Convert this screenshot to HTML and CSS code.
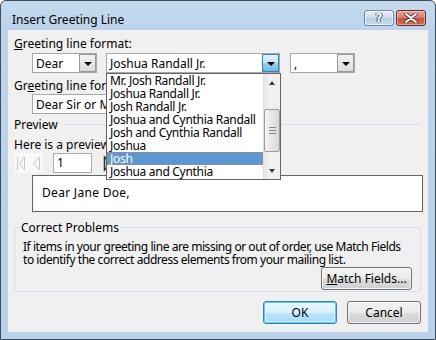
FILE: index.html
```html
<!DOCTYPE html>
<html>
<head>
<meta charset="utf-8">
<link rel="stylesheet" href="styles.css">
</head>
<body>
<div class="window">
  <div class="titlebar">
    <span class="title">Insert Greeting Line</span>
    <div class="caption-btns">
      <div class="cbtn help"><span>?</span></div>
      <div class="cbtn close">
        <svg width="14" height="10" viewBox="0 0 14 10"><path d="M2 1 L12 9 M12 1 L2 9" stroke="#5a2a26" stroke-width="3.6" stroke-linecap="round"/><path d="M2 1 L12 9 M12 1 L2 9" stroke="#fff" stroke-width="2" stroke-linecap="round"/></svg>
      </div>
    </div>
  </div>
  <div class="client">
    <div class="label l1"><u>G</u>reeting line format:</div>
    <div class="row r1">
      <div class="combo c-dear"><span class="val">Dear</span><span class="dd"><i class="tri"></i></span></div>
      <div class="combo c-name">
        <span class="val">Joshua Randall Jr.</span><span class="dd dd-hot"><i class="tri"></i></span>
        <div class="list">
          <ul class="items">
            <li>Mr. Josh Randall Jr.</li>
            <li>Joshua Randall Jr.</li>
            <li>Josh Randall Jr.</li>
            <li>Joshua and Cynthia Randall</li>
            <li>Josh and Cynthia Randall</li>
            <li>Joshua</li>
            <li class="sel">Josh</li>
            <li>Joshua and Cynthia</li>
          </ul>
          <div class="vscroll">
            <div class="arrow up"><i class="tri-up"></i></div>
            <div class="track"><div class="thumb"><span></span><span></span><span></span></div></div>
            <div class="arrow down"><i class="tri-down"></i></div>
          </div>
        </div>
      </div>
      <div class="combo c-punct"><span class="val">,</span><span class="dd"><i class="tri"></i></span></div>
    </div>
    <div class="label l2">Gr<u>e</u>eting line for invalid recipient names:</div>
    <div class="row r2">
      <div class="combo c-invalid"><span class="val">Dear Sir or Madam,</span><span class="dd"><i class="tri"></i></span></div>
    </div>
    <div class="sep-header"><span>Preview</span><div class="sep-line"></div></div>
    <div class="label l3">Here is a preview from your recipient list:</div>
    <div class="row nav">
      <div class="navbtns disabled">
        <svg width="29" height="20" viewBox="0 0 29 20"><path d="M3.5 4 V17 M10.5 4 L5.5 10.5 L10.5 17 Z M25.5 4 L19.5 10.5 L25.5 17 Z" fill="none" stroke="#c8c8c8" stroke-width="1"/></svg>
      </div>
      <div class="numbox">1</div>
      <div class="navbtns next">
        <svg width="29" height="20" viewBox="0 0 29 20"><path d="M1.5 4 L7.5 10.5 L1.5 17 Z" fill="none" stroke="#333" stroke-width="1.5"/></svg>
      </div>
    </div>
    <div class="preview-box">Dear Jane Doe,</div>
    <fieldset class="group">
      <legend>Correct Problems</legend>
      <p>If items in your greeting line are missing or out of order, use Match Fields<br>to identify the correct address elements from your mailing list.</p>
      <div class="grp-btns"><button class="btn match"><u>M</u>atch Fields...</button></div>
    </fieldset>
    <div class="footer">
      <button class="btn default">OK</button>
      <button class="btn">Cancel</button>
    </div>
  </div>
</div>
</body>
</html>
```
FILE: styles.css
```css
* { box-sizing: border-box; }
html, body { margin: 0; padding: 0; background: #fff; }
body { font-family: "Noto Sans", "Open Sans", sans-serif; font-size: 12px; color: #000; }

.window {
  width: 436px; height: 340px;
  border: 1px solid #3a4d5e;
  border-radius: 6px 6px 0 0;
  background: linear-gradient(#c6daee 0, #bcd3eb 30px, #b9d1ea 100%);
  display: flex; flex-direction: column;
  padding: 0 7px 7px 7px;
}
.titlebar {
  height: 29px; flex: none;
  display: flex; justify-content: space-between; align-items: flex-start;
}
.title { margin: 11px 0 0 4px; line-height: 15px; }
.caption-btns { display: flex; gap: 2px; margin: 9px 2px 0 0; }
.cbtn {
  width: 30px; height: 16px; border-radius: 3px;
  display: flex; align-items: center; justify-content: center;
}
.help {
  border: 1px solid #6e8aa8;
  background: linear-gradient(#e6eef7 0, #cfdcea 50%, #b9cde2 51%, #c6d9ec 100%);
  box-shadow: inset 0 0 0 1px rgba(255,255,255,0.6);
}
.help span {
  font-family: "DejaVu Sans", sans-serif; font-weight: bold; font-size: 12px; line-height: 12px;
  color: #fff; text-shadow: 0 0 1px #3d5673, 0 0 1px #3d5673, 1px 0 0 #3d5673, -1px 0 0 #3d5673;
}
.close {
  border: 1px solid #6b2b25;
  background: linear-gradient(#e4a59d 0, #d57c70 50%, #c2503f 51%, #d07060 100%);
  box-shadow: inset 0 0 0 1px rgba(255,220,210,0.5);
}

.client {
  flex: 1; background: #f0f0f0;
  padding: 0 7px 0 6px;
  display: flex; flex-direction: column;
}
.label { line-height: 15px; white-space: nowrap; overflow: hidden; }
.l1 { margin-top: 6px; }
.row { display: flex; align-items: flex-start; }
.r1 { margin-top: 2px; padding-left: 18px; }
.l2 { margin-top: 5px; }
.r2 { margin-top: 1px; padding-left: 18px; }

.combo {
  position: relative;
  height: 20px; background: #fff;
  border: 1px solid #a8a8a8;
  display: flex; align-items: center; justify-content: space-between;
  padding-left: 3px;
  white-space: nowrap;
}
.combo .val { line-height: 15px; }
.c-dear { width: 65px; }
.c-name { width: 174px; margin-left: 9px; z-index: 5; }
.c-punct { width: 65px; margin-left: 10px; }
.c-invalid { width: 174px; }
.dd {
  width: 17px; height: 18px;
  border: 1px solid #9a9a9a;
  background: linear-gradient(#f2f2f2, #dcdcdc);
  display: flex; align-items: center; justify-content: center;
}
.dd-hot {
  border-color: #3c7fb1;
  background: linear-gradient(#e3f4fc 0, #c4e5f6 50%, #98d1ef 51%, #6ebce5 100%);
}
.tri { display: block; width: 0; height: 0; border-left: 4px solid transparent; border-right: 4px solid transparent; border-top: 4px solid #000; margin-top: 1px; }

.list {
  position: absolute; left: -1px; top: 19px;
  width: 175px; height: 107px;
  background: #fff; border: 1px solid #646464;
  display: flex;
}
.items { list-style: none; margin: 0; padding: 0; flex: 1; }
.items li { height: 13px; line-height: 13px; padding-left: 3px; color: #000; white-space: nowrap; letter-spacing: -0.3px; }
.items li.sel { background: #5b97d3; color: #fff; outline: 1px dotted #c98a52; outline-offset: -1px; }
.vscroll { width: 17px; flex: none; display: flex; flex-direction: column; background: linear-gradient(90deg, #e6e6e6, #f3f3f3 40%, #eeeeee); border-left: 1px solid #e0e0e0; }
.arrow { height: 17px; display: flex; align-items: center; justify-content: center; }
.tri-up { display: block; width: 0; height: 0; border-left: 3.5px solid transparent; border-right: 3.5px solid transparent; border-bottom: 4px solid #3a3a3a; }
.tri-down { display: block; width: 0; height: 0; border-left: 3.5px solid transparent; border-right: 3.5px solid transparent; border-top: 4px solid #3a3a3a; }
.track { flex: 1; padding-top: 18px; }
.thumb {
  height: 43px;
  border: 1px solid #9c9c9c; border-radius: 2px;
  background: linear-gradient(90deg, #f4f4f4, #e6e6e6 50%, #d8d8d8);
  display: flex; flex-direction: column; align-items: center; justify-content: center; gap: 2px;
}
.thumb span { display: block; width: 7px; height: 1px; background: #8a8a8a; }

.sep-header { display: flex; align-items: center; margin-top: 3px; line-height: 15px; }
.sep-line { flex: 1; height: 1px; background: #d5dfe5; margin-left: 6px; }
.l3 { margin-top: 5px; }
.nav { margin-top: 1px; }
.navbtns { width: 29px; height: 20px; }
.navbtns.disabled { background: #f8f8f8; }
.navbtns.next { margin-left: 11px; }
.numbox {
  width: 39px; height: 20px; margin-left: 10px;
  background: #fff; border: 1px solid #abadb3;
  padding-left: 3px; line-height: 18px;
}
.preview-box {
  margin: 2px 0 0 18px;
  height: 37px; width: 391px;
  border: 1px solid #646464; background: #fff;
  padding-left: 9px; line-height: 33px;
  letter-spacing: 0.3px;
}

.group {
  margin: 8px 0 0 0; padding: 0 8px 0 8px;
  border: 1px solid #d5dfe5; border-radius: 3px;
  height: 72px;
}
.group legend { margin-left: -3px; padding: 0 1px; line-height: 15px; }
.group p { margin: 5px 0 0 0; line-height: 13px; white-space: nowrap; letter-spacing: -0.45px; }
.grp-btns { display: flex; justify-content: flex-end; margin-top: 1px; }
.btn {
  font-family: inherit; font-size: 12px; color: #000;
  height: 23px; padding: 0;
  border: 1px solid #707070; border-radius: 3px;
  background: linear-gradient(#f2f2f2 0, #ebebeb 50%, #dddddd 51%, #cfcfcf 100%);
  box-shadow: inset 0 0 0 1px rgba(255,255,255,0.7);
}
.match { width: 91px; }
.footer { display: flex; justify-content: flex-end; gap: 10px; margin-top: 9px; }
.footer .btn { width: 74px; }
.btn.default {
  border-color: #3c7fb1;
  box-shadow: inset 0 0 0 1px #48d2f8, inset 0 0 0 2px rgba(255,255,255,0.5);
  background: linear-gradient(#eaf6fd 0, #d9f0fc 50%, #bee6fd 51%, #a7d9f5 100%);
}
```
